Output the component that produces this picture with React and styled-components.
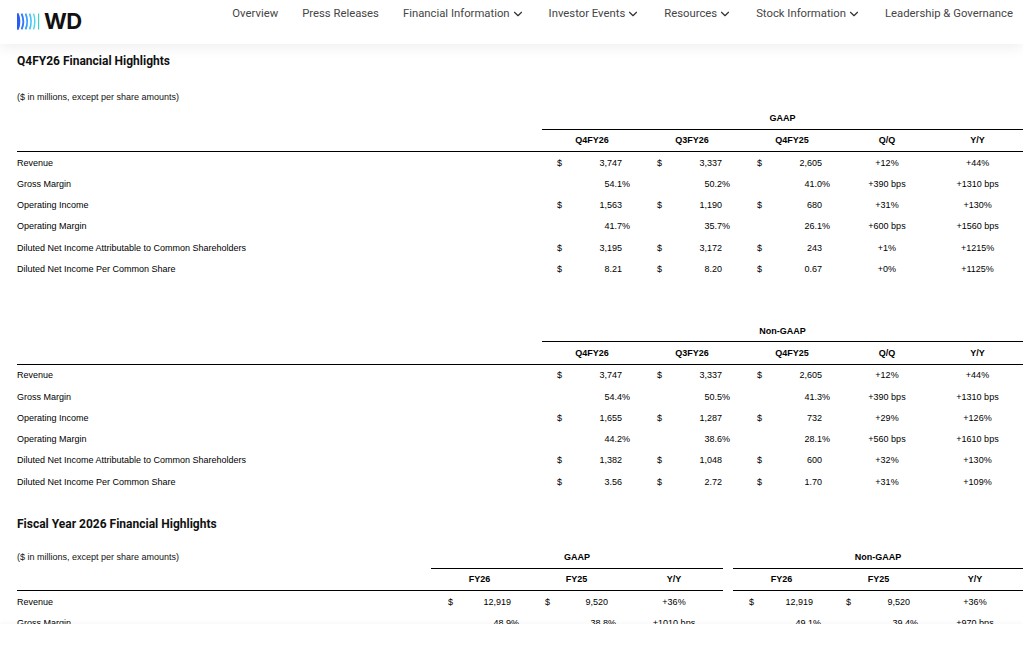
import React from 'react';
import styled, { createGlobalStyle } from 'styled-components';
import { ChevronDown } from 'lucide-react';

const GlobalStyle = createGlobalStyle`
  html, body {
    margin: 0;
    padding: 0;
    background: #ffffff;
    font-family: Roboto, "Liberation Sans", Arial, sans-serif;
  }
`;

const Page = styled.div`
  height: 100vh;
  overflow: hidden;
  background: #fff;
`;

const Header = styled.header`
  position: relative;
  z-index: 2;
  height: 44px;
  display: flex;
  align-items: flex-start;
  justify-content: space-between;
  padding: 0 10px 0 17px;
  background: #fff;
  box-shadow: 0 3px 14px rgba(0, 0, 0, 0.07);
`;

const Logo = styled.div`
  display: flex;
  align-items: center;
  gap: 3px;
  margin-top: 12px;
`;

const LogoText = styled.span`
  font-family: Inter, Roboto, sans-serif;
  font-weight: 700;
  font-size: 22px;
  line-height: 18px;
  letter-spacing: -0.5px;
  color: #111;
`;

const Nav = styled.nav`
  display: flex;
  align-items: center;
  gap: 24px;
  margin-top: 6px;
`;

const NavItem = styled.a`
  display: flex;
  align-items: center;
  font-size: 11.3px;
  line-height: 16px;
  color: #454545;
  text-decoration: none;
  white-space: nowrap;

  svg {
    margin-left: 1px;
  }
`;

const Main = styled.main`
  padding: 10px 0 0 17px;
`;

const SectionTitle = styled.h2`
  margin: 0;
  font-family: Roboto, sans-serif;
  font-weight: 700;
  font-size: 12px;
  line-height: 14px;
  color: #111;
  padding: ${(p) => p.$top || 0}px 0 ${(p) => p.$bottom || 18}px;
`;

const Table = styled.table`
  border-collapse: collapse;
  table-layout: fixed;
  width: 1006px;
  font-family: "Liberation Sans", Arial, sans-serif;
  font-size: 9px;
  color: #000;
  margin-bottom: ${(p) => p.$gap || 0}px;
`;

const Td = styled.td`
  height: 21.3px;
  padding: 0;
  vertical-align: middle;
  white-space: nowrap;
  text-align: ${(p) => p.$align || 'left'};
  border-bottom: ${(p) => (p.$line ? '1px solid #000' : 'none')};
`;

const Th = styled(Td).attrs({ as: 'th' })`
  font-weight: 700;
  text-align: center;
`;

const Note = styled.span`
  color: #111;
`;

const Money = styled.div`
  display: flex;
  align-items: center;
  padding: 0 ${(p) => p.$pr || 12}px 0 ${(p) => p.$pl || 15}px;
`;

const Dollar = styled.span`
  width: 10px;
`;

const Num = styled.span`
  flex: 1;
  text-align: right;
`;

const Suffix = styled.span`
  width: 8px;
  text-align: left;
`;

const BottomBar = styled.div`
  position: fixed;
  left: 0;
  right: 0;
  bottom: 0;
  height: 39px;
  background: #fff;
  box-shadow: 0 -1px 4px rgba(0, 0, 0, 0.04);
  z-index: 3;
`;

const LogoMark = () => (
  <svg width="24" height="17" viewBox="0 0 24 17">
    <path d="M0 0.3 H1.6 Q5.2 8.5 1.6 16.7 H0 Z" fill="#2a5cf5" />
    <path d="M4.6 0.6 Q8 8.5 4.6 16.4" stroke="#3478ff" strokeWidth="1.9" fill="none" />
    <path d="M8.6 0.6 Q11.8 8.5 8.6 16.4" stroke="#3d9dff" strokeWidth="1.8" fill="none" />
    <path d="M12.6 0.6 Q15.6 8.5 12.6 16.4" stroke="#3ec2f8" strokeWidth="1.6" fill="none" />
    <path d="M16.6 0.6 Q19 8.5 16.6 16.4" stroke="#4ad8ee" strokeWidth="1.4" fill="none" />
    <path d="M21.6 0.4 V16.6" stroke="#41cfc0" strokeWidth="1.2" fill="none" />
  </svg>
);

const navItems = [
  ['Overview', false],
  ['Press Releases', false],
  ['Financial Information', true],
  ['Investor Events', true],
  ['Resources', true],
  ['Stock Information', true],
  ['Leadership & Governance', false],
];

const m = (v) => ({ d: '$', v });
const p = (v) => ({ v, s: '%' });

const gaapQ = [
  ['Revenue', [m('3,747'), m('3,337'), m('2,605')], '+12%', '+44%'],
  ['Gross Margin', [p('54.1'), p('50.2'), p('41.0')], '+390 bps', '+1310 bps'],
  ['Operating Income', [m('1,563'), m('1,190'), m('680')], '+31%', '+130%'],
  ['Operating Margin', [p('41.7'), p('35.7'), p('26.1')], '+600 bps', '+1560 bps'],
  ['Diluted Net Income Attributable to Common Shareholders', [m('3,195'), m('3,172'), m('243')], '+1%', '+1215%'],
  ['Diluted Net Income Per Common Share', [m('8.21'), m('8.20'), m('0.67')], '+0%', '+1125%'],
];

const nonGaapQ = [
  ['Revenue', [m('3,747'), m('3,337'), m('2,605')], '+12%', '+44%'],
  ['Gross Margin', [p('54.4'), p('50.5'), p('41.3')], '+390 bps', '+1310 bps'],
  ['Operating Income', [m('1,655'), m('1,287'), m('732')], '+29%', '+126%'],
  ['Operating Margin', [p('44.2'), p('38.6'), p('28.1')], '+560 bps', '+1610 bps'],
  ['Diluted Net Income Attributable to Common Shareholders', [m('1,382'), m('1,048'), m('600')], '+32%', '+130%'],
  ['Diluted Net Income Per Common Share', [m('3.56'), m('2.72'), m('1.70')], '+31%', '+109%'],
];

const fyRows = [
  ['Revenue', [m('12,919'), m('9,520')], '+36%', [m('12,919'), m('9,520')], '+36%'],
  ['Gross Margin', [p('48.9'), p('38.8')], '+1010 bps', [p('49.1'), p('39.4')], '+970 bps'],
];

const MoneyCell = ({ cell, pl, pr }) => (
  <Td>
    <Money $pl={pl} $pr={pr}>
      <Dollar>{cell.d || ''}</Dollar>
      <Num>{cell.v}</Num>
      <Suffix>{cell.s || ''}</Suffix>
    </Money>
  </Td>
);

const QuarterTable = ({ title, note, rows, gap }) => (
  <Table $gap={gap}>
    <colgroup>
      <col style={{ width: 525 }} />
      <col style={{ width: 100 }} />
      <col style={{ width: 100 }} />
      <col style={{ width: 100 }} />
      <col style={{ width: 90 }} />
      <col style={{ width: 91 }} />
    </colgroup>
    <thead>
      <tr>
        <Td colSpan={6}>{note && <Note>{note}</Note>}</Td>
      </tr>
      <tr>
        <Td />
        <Th colSpan={5} $line>{title}</Th>
      </tr>
      <tr>
        <Td $line />
        {['Q4FY26', 'Q3FY26', 'Q4FY25', 'Q/Q', 'Y/Y'].map((h) => (
          <Th key={h} $line>{h}</Th>
        ))}
      </tr>
    </thead>
    <tbody>
      {rows.map(([label, cells, qq, yy]) => (
        <tr key={label}>
          <Td>{label}</Td>
          {cells.map((c, i) => (
            <MoneyCell key={i} cell={c} />
          ))}
          <Td $align="center">{qq}</Td>
          <Td $align="center">{yy}</Td>
        </tr>
      ))}
    </tbody>
  </Table>
);

const YearTable = () => (
  <Table>
    <colgroup>
      <col style={{ width: 414 }} />
      <col style={{ width: 97 }} />
      <col style={{ width: 97 }} />
      <col style={{ width: 98 }} />
      <col style={{ width: 10 }} />
      <col style={{ width: 97 }} />
      <col style={{ width: 97 }} />
      <col style={{ width: 96 }} />
    </colgroup>
    <thead>
      <tr>
        <Td><Note>($ in millions, except per share amounts)</Note></Td>
        <Th colSpan={3} $line>GAAP</Th>
        <Td />
        <Th colSpan={3} $line>Non-GAAP</Th>
      </tr>
      <tr>
        <Td $line />
        {['FY26', 'FY25', 'Y/Y'].map((h) => (
          <Th key={'g' + h} $line>{h}</Th>
        ))}
        <Td />
        {['FY26', 'FY25', 'Y/Y'].map((h) => (
          <Th key={'n' + h} $line>{h}</Th>
        ))}
      </tr>
    </thead>
    <tbody>
      {fyRows.map(([label, g, gy, n, ny]) => (
        <tr key={label}>
          <Td>{label}</Td>
          {g.map((c, i) => (
            <MoneyCell key={'g' + i} cell={c} pl={17} pr={9} />
          ))}
          <Td $align="center">{gy}</Td>
          <Td />
          {n.map((c, i) => (
            <MoneyCell key={'n' + i} cell={c} pl={16} pr={9} />
          ))}
          <Td $align="center">{ny}</Td>
        </tr>
      ))}
    </tbody>
  </Table>
);

export default function App() {
  return (
    <Page>
      <GlobalStyle />
      <Header>
        <Logo>
          <LogoMark />
          <LogoText>WD</LogoText>
        </Logo>
        <Nav>
          {navItems.map(([label, drop]) => (
            <NavItem key={label} href="#">
              {label}
              {drop && <ChevronDown size={14} strokeWidth={2} color="#333" />}
            </NavItem>
          ))}
        </Nav>
      </Header>
      <Main>
        <SectionTitle>Q4FY26 Financial Highlights</SectionTitle>
        <QuarterTable title="GAAP" note="($ in millions, except per share amounts)" rows={gaapQ} gap={19} />
        <QuarterTable title="Non-GAAP" rows={nonGaapQ} />
        <SectionTitle $top={25} $bottom={15}>Fiscal Year 2026 Financial Highlights</SectionTitle>
        <YearTable />
      </Main>
      <BottomBar />
    </Page>
  );
}
